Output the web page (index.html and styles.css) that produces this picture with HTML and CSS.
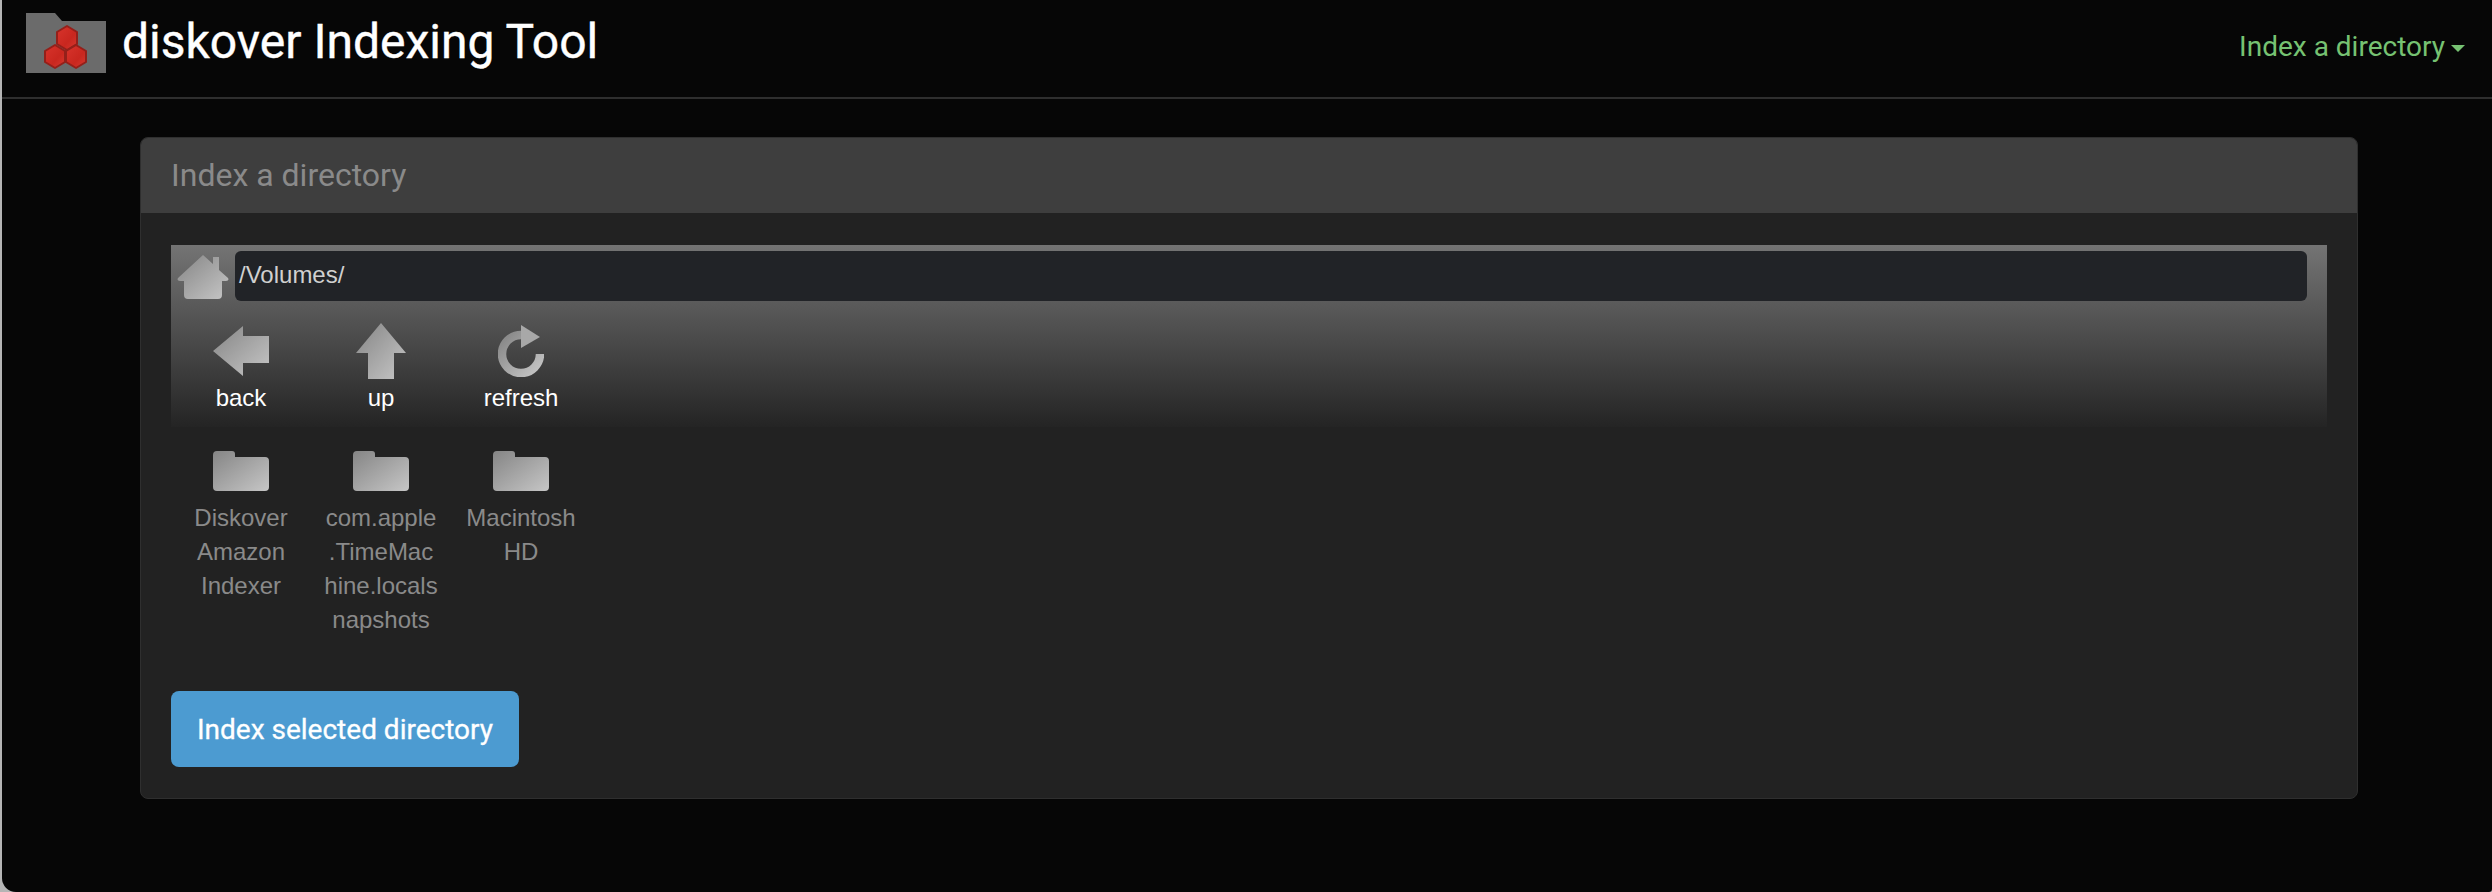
FILE: index.html
```html
<!DOCTYPE html>
<html>
<head>
  <title>diskover Indexing Tool</title>
  <link rel="stylesheet" href="styles.css">
</head>
<body>

<div class="window">
  <div class="navbar">
    <div class="brand">
      <svg class="logo" width="80" height="60" viewBox="0 0 80 60">
        <defs>
          <linearGradient id="ruby" x1="0" y1="0" x2="1" y2="1">
            <stop offset="0" stop-color="#d8342c"/>
            <stop offset="0.6" stop-color="#c9271f"/>
            <stop offset="1" stop-color="#d63a30"/>
          </linearGradient>
        </defs>
        <path d="M0 0 H29 L36 8 H80 V60 H0 Z" fill="#6b6b6b"/>
        <g fill="url(#ruby)" stroke="#94201a" stroke-width="2" stroke-linejoin="round">
          <path d="M41 13 L51 19 V31 L41 37 L31 31 V19 Z"/>
          <path d="M29 32 L39 38 V49 L29 55 L19 49 V38 Z"/>
          <path d="M50 32 L60 38 V49 L50 55 L40 49 V38 Z"/>
        </g>
      </svg>
      <span class="title">diskover Indexing Tool</span>
    </div>
    <div class="nav-link">Index a directory<span class="caret"></span></div>
  </div>

  <div class="main">
    <div class="panel">
      <div class="panel-heading">Index a directory</div>
      <div class="panel-body">
        <div class="toolbar">
          <div class="address-row">
            <svg class="home" width="52" height="44" viewBox="0 0 52 44">
              <defs>
                <linearGradient id="metal" x1="0" y1="0" x2="1" y2="1">
                  <stop offset="0" stop-color="#858585"/>
                  <stop offset="1" stop-color="#c6c6c6"/>
                </linearGradient>
              </defs>
              <path fill="url(#metal)" d="M26 0 L36 9 V2 H42 V15 L51 23 Q52.500 26 49 26 H45 V40 Q45 44 41 44 H11 Q7 44 7 40 V26 H3 Q-.5 26 1 23 Z"/>
            </svg>
            <div class="address">/Volumes/</div>
          </div>
          <div class="tools">
            <div class="tool">
              <div class="tool-icon">
                <svg width="56" height="50" viewBox="0 0 56 50"><path fill="url(#metal)" d="M0 25 L30 0 V10 H56 V37 H30 V50 Z"/></svg>
              </div>
              <span>back</span>
            </div>
            <div class="tool">
              <div class="tool-icon">
                <svg width="50" height="56" viewBox="0 0 50 56"><path fill="url(#metal)" d="M25 0 L50 30 H38 V56 H12 V30 H0 Z"/></svg>
              </div>
              <span>up</span>
            </div>
            <div class="tool">
              <div class="tool-icon">
                <svg width="46" height="52" viewBox="0 0 46 52">
                  <path fill="none" stroke="url(#metal)" stroke-width="8.500" d="M42 29 A19 19 0 1 1 23 10"/>
                  <path fill="#a8a8a8" d="M23 0 L42 12 L23 23 Z"/>
                </svg>
              </div>
              <span>refresh</span>
            </div>
          </div>
        </div>

        <div class="files">
          <div class="file">
            <svg width="56" height="40" viewBox="0 0 56 40"><path fill="url(#metal)" d="M4 0 H19 Q22 0 22 3 V6 H52 Q56 6 56 10 V36 Q56 40 52 40 H4 Q0 40 0 36 V4 Q0 0 4 0 Z"/></svg>
            <div class="file-name">Diskover Amazon Indexer</div>
          </div>
          <div class="file">
            <svg width="56" height="40" viewBox="0 0 56 40"><path fill="url(#metal)" d="M4 0 H19 Q22 0 22 3 V6 H52 Q56 6 56 10 V36 Q56 40 52 40 H4 Q0 40 0 36 V4 Q0 0 4 0 Z"/></svg>
            <div class="file-name">com.apple.TimeMachine.localsnapshots</div>
          </div>
          <div class="file">
            <svg width="56" height="40" viewBox="0 0 56 40"><path fill="url(#metal)" d="M4 0 H19 Q22 0 22 3 V6 H52 Q56 6 56 10 V36 Q56 40 52 40 H4 Q0 40 0 36 V4 Q0 0 4 0 Z"/></svg>
            <div class="file-name">Macintosh HD</div>
          </div>
        </div>

        <button class="btn">Index selected directory</button>
      </div>
    </div>
  </div>
</div>

</body>
</html>
```

FILE: styles.css
```css
html, body {
  margin: 0;
  height: 100%;
  background-color: #b5b5b5;
}
body {
  font-family: Roboto, sans-serif;
  overflow: hidden;
}
.window {
  height: 892px;
  margin-left: 2px;
  background-color: #060606;
  border-bottom-left-radius: 14px;
  border-bottom-right-radius: 3px;
}

.navbar {
  display: flex;
  justify-content: space-between;
  align-items: flex-start;
  height: 84px;
  padding: 13px 27px 0 24px;
  border-bottom: 2px solid #2e2e2e;
}
.brand {
  display: flex;
  align-items: flex-start;
  gap: 16px;
}
.logo {
  display: block;
}
.title {
  font-size: 48px;
  line-height: 58px;
  color: #fff;
  -webkit-text-stroke: 0.4px #fff;
}
.nav-link {
  display: flex;
  align-items: center;
  margin-top: 17px;
  font-size: 28px;
  line-height: 34px;
  color: #76c272;
}
.caret {
  margin-left: 6px;
  margin-top: 2px;
  border-top: 7px solid #76c272;
  border-left: 7px solid transparent;
  border-right: 7px solid transparent;
}

.main {
  padding: 38px 134px 0 138px;
}
.panel {
  border: 1px solid #2f2f2f;
  border-radius: 8px;
  background-color: #222;
}
.panel-heading {
  height: 75px;
  padding-left: 30px;
  font-size: 32px;
  line-height: 74px;
  color: #8a8a8a;
  background-color: #3e3e3e;
  border-top-left-radius: 7px;
  border-top-right-radius: 7px;
}
.panel-body {
  padding: 32px 30px 31px;
}

.toolbar {
  height: 182px;
  background: linear-gradient(#747474, #242424);
  font-family: "Liberation Sans", Arial, sans-serif;
  font-size: 24px;
}
.address-row {
  display: flex;
  align-items: flex-start;
  gap: 6px;
  padding: 6px 20px 0 6px;
}
.home {
  margin-top: 4px;
  flex-shrink: 0;
}
.address {
  flex: 1;
  height: 50px;
  padding-left: 4px;
  line-height: 48px;
  color: #d0d0d0;
  background-color: #212327;
  border-radius: 6px;
}
.tools {
  display: flex;
  margin-top: 22px;
}
.tool {
  display: flex;
  flex-direction: column;
  align-items: center;
  width: 140px;
  color: #fff;
}
.tool-icon {
  display: flex;
  align-items: center;
  height: 56px;
  margin-bottom: 2px;
}
.tool span {
  line-height: 34px;
}

.files {
  display: flex;
  margin-top: 24px;
  height: 186px;
}
.file {
  display: flex;
  flex-direction: column;
  align-items: center;
  width: 140px;
}
.file-name {
  width: 116px;
  margin-top: 10px;
  font-family: "Liberation Sans", Arial, sans-serif;
  font-size: 24px;
  line-height: 34px;
  text-align: center;
  word-wrap: break-word;
  color: #8a8a8a;
}

.btn {
  display: block;
  width: 348px;
  height: 76px;
  margin-top: 54px;
  padding: 0;
  font-family: Roboto, sans-serif;
  font-size: 28px;
  color: #fff;
  -webkit-text-stroke: 0.3px #fff;
  background-color: #4c9bd1;
  border: none;
  border-radius: 8px;
}
```
